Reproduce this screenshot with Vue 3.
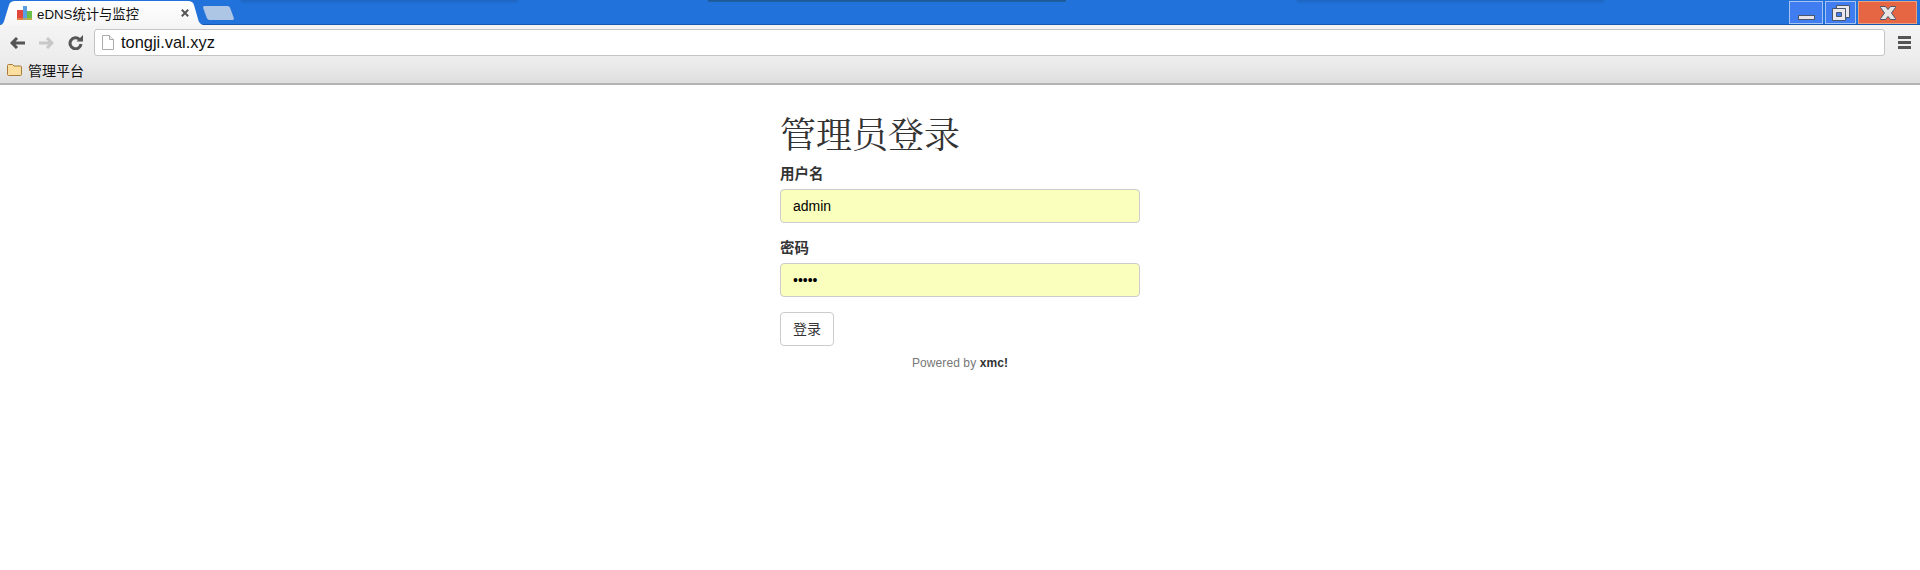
<script setup>
const username = 'admin'
</script>

<template>
  <div class="page">
    <header class="chrome">
      <div class="titlebar">
        <div class="shadow s1"></div>
        <div class="shadow s2"></div>
        <div class="shadow s3"></div>
        <div class="tab">
          <svg class="favicon" width="15" height="14" viewBox="0 0 15 14">
            <rect x="0" y="4" width="6" height="10" fill="#e2463c" />
            <rect x="6" y="0" width="4" height="14" fill="#5b9fe0" />
            <rect x="10" y="5" width="5" height="9" fill="#6cc04a" />
            <rect x="0" y="12" width="15" height="2" fill="#e8a33c" opacity=".6" />
          </svg>
          <span class="tab-title">eDNS统计与监控</span>
          <svg class="tab-close" width="8" height="8" viewBox="0 0 8 8">
            <path d="M.8.8l6.400 6.400M7.200.8L.8 7.200" stroke="#555" stroke-width="2" fill="none" />
          </svg>
        </div>
        <div class="newtab"></div>
        <div class="winbtns">
          <div class="winbtn w-min"><span class="min-glyph"></span></div>
          <div class="winbtn w-max">
            <svg width="18" height="16" viewBox="0 0 18 16">
              <path d="M4.500.5h13v12h-13z" fill="#e8e8ee" stroke="#4a5568" />
              <path d="M.5 3.500h13v12H.5z" fill="#e8e8ee" stroke="#4a5568" />
              <path d="M4.500 7.500h5v4h-5z" fill="#3f7df0" stroke="#4a5568" />
            </svg>
          </div>
          <div class="winbtn w-close">
            <svg width="16" height="14" viewBox="0 0 16 14">
              <path d="M.5.5h5L8 3.500 10.500.5h5v1L11.500 7l4 5.500v1h-5L8 10.500 5.500 13.500h-5v-1L4.500 7 .5 1.500z" fill="#e6e6e6" stroke="#4a5568" />
            </svg>
          </div>
        </div>
      </div>
      <div class="toolbar">
        <svg class="nav back" width="15" height="12" viewBox="0 0 15 12">
          <path d="M7 1L2 6l5 5M2.500 6H15" stroke="#555" stroke-width="3" fill="none" />
        </svg>
        <svg class="nav fwd" width="15" height="12" viewBox="0 0 15 12">
          <path d="M8 1l5 5-5 5M12.500 6H0" stroke="#c8c8c8" stroke-width="3" fill="none" />
        </svg>
        <svg class="nav reload" width="15" height="15" viewBox="0 0 15 15">
          <path d="M11.500 4.500A5.500 5.500 0 1 0 13 9" stroke="#555" stroke-width="3" fill="none" />
          <path d="M8.500 6.500H15V0z" fill="#555" />
        </svg>
        <div class="omnibox">
          <svg width="12" height="15" viewBox="0 0 12 15">
            <path d="M.5.500h7l4 4v10H.5z" fill="#fff" stroke="#aaa" />
            <path d="M7.500.5v4h4" fill="#eee" stroke="#aaa" />
          </svg>
          <span class="url">tongji.val.xyz</span>
        </div>
        <div class="menu"><i></i><i></i><i></i></div>
      </div>
      <div class="bookmarks">
        <svg width="15" height="12" viewBox="0 0 15 12">
          <path d="M.5 1.500a1 1 0 0 1 1-1h4L7 2h6.500a1 1 0 0 1 1 1v7.500a1 1 0 0 1-1 1h-12a1 1 0 0 1-1-1z" fill="#fbdf9f" stroke="#a87c3c" />
        </svg>
        <span class="bm-label">管理平台</span>
      </div>
    </header>
    <main class="content">
      <form class="login" @submit.prevent>
        <h2 class="heading">管理员登录</h2>
        <div class="group">
          <label class="label" for="u">用户名</label>
          <input id="u" class="input" type="text" :value="username" />
        </div>
        <div class="group">
          <label class="label" for="p">密码</label>
          <input id="p" class="input" type="password" value="admin" />
        </div>
        <button class="submit" type="button">登录</button>
      </form>
      <p class="powered">Powered by <b>xmc!</b></p>
    </main>
  </div>
</template>

<style>
html, body { margin: 0; background: #fff; }
</style>

<style scoped>
.page {
  width: 1920px;
  height: 570px;
  overflow: hidden;
  background: #fff;
  font-family: "Liberation Sans", "Noto Sans CJK SC", sans-serif;
  color: #333;
}
.titlebar {
  position: relative;
  height: 25px;
  display: flex;
  align-items: flex-end;
  background: #2173db;
  border-bottom: 1px solid #1659ae;
  box-sizing: border-box;
}
.shadow { position: absolute; top: 0; height: 1px; box-shadow: 0 1px 3px rgba(20, 60, 120, .45); background: #1f66c0; }
.s1 { left: 241px; width: 277px; }
.s2 { left: 708px; width: 358px; height: 1px; background: #1b5a9c; box-shadow: 0 1px 0 #205f9c; }
.s3 { left: 1297px; width: 307px; }
.tab {
  position: relative;
  z-index: 1;
  flex: none;
  margin-bottom: -1px;
  width: 205px;
  height: 24px;
  box-sizing: border-box;
  display: flex;
  align-items: center;
  padding: 0 16px 0 17px;
  background: linear-gradient(#fff, #f6f6f6);
  clip-path: path('M0 24 C3 24 4 21 5 17 L9 4 C10 1 12 0 15 0 L188 0 C191 0 193 1 194 4 L198 18 C199 22 201 24 205 24 Z');
}
.favicon { flex: none; margin-right: 5px; }
.tab-title { flex: 1; font-size: 13.300px; color: #111; white-space: nowrap; }
.tab-close { flex: none; }
.newtab {
  flex: none;
  width: 27px;
  height: 14px;
  margin: 0 0 4px 0;
  background: #adc6e6;
  border-radius: 2px;
  transform: skewX(20deg);
}
.winbtns { position: absolute; top: 1px; right: 3px; display: flex; gap: 2px; }
.winbtn {
  height: 23px;
  box-sizing: border-box;
  border: 1px solid #a5c3f0;
  display: flex;
  align-items: center;
  justify-content: center;
}
.w-min { width: 34px; background: #3f7df0; }
.w-max { width: 31px; background: #3f7df0; }
.w-close { width: 59px; background: #e66643; border-color: #e8a080; }
.min-glyph { display: block; width: 17px; height: 5px; margin-top: 9px; box-sizing: border-box; background: #e4e4ea; border: 1px solid #4a5568; }
.toolbar {
  height: 37px;
  box-sizing: border-box;
  display: flex;
  align-items: center;
  padding: 0 0 2px 10px;
  background: linear-gradient(#f4f4f4, #ececec);
}
.nav { flex: none; }
.fwd { margin-left: 14px; }
.reload { margin-left: 14px; }
.omnibox {
  flex: none;
  width: 1791px;
  height: 27px;
  margin-left: 11px;
  box-sizing: border-box;
  display: flex;
  align-items: center;
  gap: 7px;
  padding-left: 7px;
  background: #fff;
  border: 1px solid #c4c4c4;
  border-radius: 3px;
}
.url { font-size: 16.400px; color: #111; }
.menu { flex: none; margin-left: 13px; display: flex; flex-direction: column; gap: 2px; }
.menu i { display: block; width: 13px; height: 3px; background: #555; }
.bookmarks {
  height: 23px;
  box-sizing: border-box;
  display: flex;
  align-items: center;
  gap: 6px;
  padding: 0 0 5px 7px;
  background: linear-gradient(#ececec, #dedede);
  border-bottom: 2px solid #b4b4b4;
}
.bm-label { font-size: 14px; color: #111; }
.content { width: 360px; margin: 0 auto; }
.login { display: flex; flex-direction: column; align-items: flex-start; }
.heading {
  margin: 31px 0 8px;
  font-size: 36px;
  font-weight: 400;
  line-height: 40px;
  font-family: "Liberation Serif", "Noto Serif CJK SC", "Noto Sans CJK SC", serif;
}
.group { width: 100%; margin-bottom: 15px; }
.label {
  display: block;
  margin-bottom: 5px;
  font-size: 14.500px;
  font-weight: 700;
  line-height: 20px;
}
.input {
  display: block;
  width: 100%;
  height: 34px;
  box-sizing: border-box;
  padding: 6px 12px;
  font: 14px/20px "Liberation Sans", sans-serif;
  color: #000;
  background: #faffbd;
  border: 1px solid #ccc;
  border-radius: 4px;
}
.submit {
  height: 34px;
  width: 54px;
  padding: 0;
  font: 14px/20px "Liberation Sans", "Noto Sans CJK SC", sans-serif;
  color: #333;
  background: #fff;
  border: 1px solid #ccc;
  border-radius: 4px;
}
.powered {
  margin: 9px 0 0;
  text-align: center;
  font-size: 12px;
  line-height: 17px;
  letter-spacing: .1px;
  color: #777;
}
.powered b { color: #333; }
</style>
